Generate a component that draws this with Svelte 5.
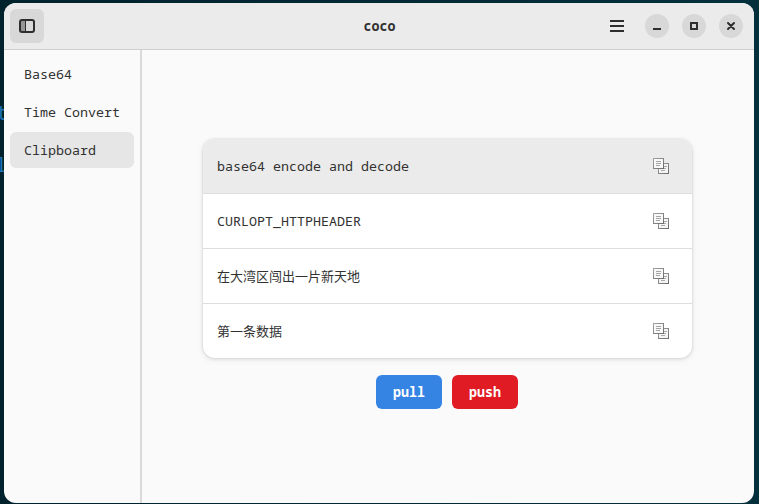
<script>
  const pages = ['Base64', 'Time Convert', 'Clipboard'];
  const clips = [
    { text: 'base64 encode and decode' },
    { text: 'CURLOPT_HTTPHEADER' },
    { text: '在大湾区闯出一片新天地', lang: 'zh' },
    { text: '第一条数据', lang: 'zh' }
  ];
  let page = $state('Clipboard');
  let selected = $state(0);
</script>

<div class="desktop">
  <span class="behind first">t</span>
  <span class="behind second">l</span>
  <div class="window">
    <header>
      <div class="side"><button class="toggle" aria-label="Toggle sidebar">
        <svg width="16" height="16" viewBox="0 0 16 16">
          <rect x="2" y="3" width="4" height="10" fill="#969696" />
          <path d="M6.5 3v10" stroke="#2e2e2e" stroke-width="1" />
          <rect x="1" y="2" width="14" height="12" rx="2" fill="none" stroke="#2e2e2e" stroke-width="2" />
        </svg>
      </button></div>
      <h1>coco</h1>
      <div class="side controls">
        <button class="menu" aria-label="Menu">
          <svg width="16" height="16" viewBox="0 0 16 16"><path d="M1 3h14M1 8h14M1 13h14" stroke="#2e2e2e" stroke-width="2" /></svg>
        </button>
        <button class="round" aria-label="Minimize">
          <svg width="16" height="16" viewBox="0 0 16 16"><path d="M4 11h8" stroke="#2e2e2e" stroke-width="2" /></svg>
        </button>
        <button class="round" aria-label="Maximize">
          <svg width="16" height="16" viewBox="0 0 16 16"><rect x="5" y="5" width="6" height="6" fill="none" stroke="#2e2e2e" stroke-width="2" /></svg>
        </button>
        <button class="round" aria-label="Close">
          <svg width="16" height="16" viewBox="0 0 16 16"><path d="M5 5l6 6M11 5l-6 6" stroke="#2e2e2e" stroke-width="2" stroke-linecap="round" /></svg>
        </button>
      </div>
    </header>
    <div class="body">
      <nav>
        {#each pages as name}
          <button class:active={page === name} onclick={() => (page = name)}>{name}</button>
        {/each}
      </nav>
      <main>
        <div class="list">
          {#each clips as clip, i}
            <button class="row" class:active={selected === i} onclick={() => (selected = i)}>
              <span class:zh={clip.lang === 'zh'}>{clip.text}</span>
              <svg width="16" height="16" viewBox="0 0 16 16">
                <defs>
                  <linearGradient id="edge{i}" x1="0" y1="0" x2="1" y2="1">
                    <stop offset="0" stop-color="#a2a2a2" /><stop offset="1" stop-color="#6c6c6c" />
                  </linearGradient>
                </defs>
                <rect x="5.5" y="5.5" width="10" height="10" fill="#f4f4f4" stroke="url(#edge{i})" />
                <path d="M8 8.5h6M8 10.5h5M8 12.5h4" stroke="#aaa" />
                <rect x="0.5" y="0.5" width="10" height="10" fill="#f8f8f8" stroke="url(#edge{i})" />
                <path d="M3 3.5h5M3 5.5h5M3 7.5h4" stroke="#a4a4a4" />
              </svg>
            </button>
          {/each}
        </div>
        <div class="actions">
          <button class="pull">pull</button>
          <button class="push">push</button>
        </div>
      </main>
    </div>
  </div>
</div>

<style>
  :global(body) { margin: 0; }
  .desktop {
    position: relative;
    box-sizing: border-box;
    width: 759px;
    height: 504px;
    padding: 3px 5px 1px 4px;
    overflow: hidden;
    background: linear-gradient(90deg, #00222c, #03303c);
    font-family: "Noto Sans Mono", "DejaVu Sans Mono", "Noto Sans CJK SC", monospace;
    font-size: 13.33px;
    color: #323232;
  }
  .behind { position: absolute; color: #1b72b4; font-size: 20px; line-height: 24px; }
  .first { left: -4px; top: 101px; }
  .second { left: -5px; top: 153px; }
  .window {
    position: relative;
    display: flex;
    flex-direction: column;
    height: 500px;
    border-radius: 12px;
    overflow: hidden;
    background: #fafafa;
  }
  button {
    margin: 0;
    padding: 0;
    border: 0;
    background: none;
    font: inherit;
    color: inherit;
  }
  svg { display: block; flex: none; }
  header {
    display: flex;
    align-items: center;
    box-sizing: border-box;
    height: 47px;
    flex: none;
    padding: 0 6px;
    background: #ebebeb;
    border-bottom: 1px solid #cfcfcf;
  }
  .side { flex: 1 1 0; min-width: 0; display: flex; align-items: center; }
  h1 { margin: 0; padding-left: 6px; font-size: 13.33px; line-height: 18px; font-weight: 700; }
  .toggle {
    display: flex;
    align-items: center;
    justify-content: center;
    width: 34px;
    height: 34px;
    border-radius: 6px;
    background: #d8d8d8;
  }
  .controls { justify-content: flex-end; gap: 13px; padding-right: 5px; box-sizing: border-box; }
  .menu { width: 16px; margin-right: 7px; }
  .round {
    display: flex;
    align-items: center;
    justify-content: center;
    width: 24px;
    height: 24px;
    border-radius: 50%;
    background: #d8d8d8;
  }
  .body { flex: 1; display: flex; }
  nav {
    display: flex;
    flex-direction: column;
    gap: 2px;
    box-sizing: border-box;
    width: 138px;
    padding: 6px;
    border-right: 2px solid #dadada;
  }
  nav button {
    height: 36px;
    padding: 0 14px;
    border-radius: 6px;
    text-align: left;
    white-space: nowrap;
  }
  nav button.active { background: #e6e6e6; }
  main {
    flex: 1;
    display: flex;
    flex-direction: column;
    align-items: center;
    padding: 89px 1px 0 0;
  }
  .list {
    width: 489px;
    border-radius: 12px;
    overflow: hidden;
    background: #fff;
    box-shadow: 0 0 0 1px rgba(0, 0, 6, 0.03), 0 1px 3px 1px rgba(0, 0, 6, 0.07), 0 2px 6px 2px rgba(0, 0, 6, 0.03);
  }
  .row {
    display: flex;
    align-items: center;
    justify-content: space-between;
    box-sizing: border-box;
    width: 100%;
    height: 55px;
    padding: 0 23px 0 14px;
    border-bottom: 1px solid #dedede;
    text-align: left;
  }
  .row:last-child { height: 54px; border-bottom: 0; }
  .row.active { background: #ebebeb; }
  .zh { font-family: "Noto Sans CJK SC", sans-serif; font-size: 13px; line-height: 18px; }
  .actions { display: flex; gap: 10px; margin: 17px 1px 0 0; }
  .actions button {
    width: 66px;
    height: 34px;
    border-radius: 6px;
    color: #fff;
    font-weight: 700;
  }
  .pull { background: #3584e4; }
  .push { background: #e01b24; }
</style>
